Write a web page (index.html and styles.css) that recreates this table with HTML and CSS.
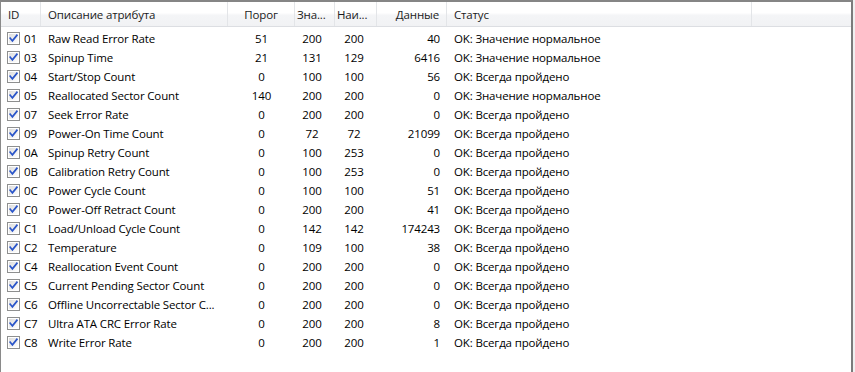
FILE: index.html
```html
<!DOCTYPE html>
<html lang="ru">
<head>
<meta charset="utf-8">
<title>SMART</title>
<link rel="stylesheet" href="styles.css">
</head>
<body>
<svg class="defs" width="0" height="0" aria-hidden="true">
  <defs>
    <linearGradient id="cbg" x1="0" y1="0" x2="1" y2="1">
      <stop offset="0" stop-color="#dcdcdc"/>
      <stop offset="1" stop-color="#ffffff"/>
    </linearGradient>
    <symbol id="cb" viewBox="0 0 13 13">
      <rect x="0.5" y="0.5" width="12" height="12" fill="#fff" stroke="#8e8f8f"/>
      <rect x="2" y="2" width="9" height="9" fill="url(#cbg)"/>
      <path d="M3.2 6.2 L5.4 8.8 L9.9 3.3" fill="none" stroke="#2a55c9" stroke-width="1.7" stroke-linecap="square" stroke-linejoin="miter"/>
    </symbol>
  </defs>
</svg>
<div class="list">
  <div class="head">
    <div class="hc h-id">ID</div>
    <div class="hc h-desc">Описание атрибута</div>
    <div class="hc h-c">Порог</div>
    <div class="hc h-l">Зна...</div>
    <div class="hc h-l">Наи...</div>
    <div class="hc h-r">Данные</div>
    <div class="hc h-st">Статус</div>
    <div class="hc h-end"></div>
  </div>
  <div class="rows">
    <div class="row"><div class="c c-id"><svg class="cb"><use href="#cb"/></svg>01</div><div class="c c-desc">Raw Read Error Rate</div><div class="c c-p">51</div><div class="c c-v">200</div><div class="c c-w">200</div><div class="c c-d">40</div><div class="c c-s">OK: Значение нормальное</div></div>
    <div class="row"><div class="c c-id"><svg class="cb"><use href="#cb"/></svg>03</div><div class="c c-desc">Spinup Time</div><div class="c c-p">21</div><div class="c c-v">131</div><div class="c c-w">129</div><div class="c c-d">6416</div><div class="c c-s">OK: Значение нормальное</div></div>
    <div class="row"><div class="c c-id"><svg class="cb"><use href="#cb"/></svg>04</div><div class="c c-desc">Start/Stop Count</div><div class="c c-p">0</div><div class="c c-v">100</div><div class="c c-w">100</div><div class="c c-d">56</div><div class="c c-s">OK: Всегда пройдено</div></div>
    <div class="row"><div class="c c-id"><svg class="cb"><use href="#cb"/></svg>05</div><div class="c c-desc">Reallocated Sector Count</div><div class="c c-p">140</div><div class="c c-v">200</div><div class="c c-w">200</div><div class="c c-d">0</div><div class="c c-s">OK: Значение нормальное</div></div>
    <div class="row"><div class="c c-id"><svg class="cb"><use href="#cb"/></svg>07</div><div class="c c-desc">Seek Error Rate</div><div class="c c-p">0</div><div class="c c-v">200</div><div class="c c-w">200</div><div class="c c-d">0</div><div class="c c-s">OK: Всегда пройдено</div></div>
    <div class="row"><div class="c c-id"><svg class="cb"><use href="#cb"/></svg>09</div><div class="c c-desc">Power-On Time Count</div><div class="c c-p">0</div><div class="c c-v">72</div><div class="c c-w">72</div><div class="c c-d">21099</div><div class="c c-s">OK: Всегда пройдено</div></div>
    <div class="row"><div class="c c-id"><svg class="cb"><use href="#cb"/></svg>0A</div><div class="c c-desc">Spinup Retry Count</div><div class="c c-p">0</div><div class="c c-v">100</div><div class="c c-w">253</div><div class="c c-d">0</div><div class="c c-s">OK: Всегда пройдено</div></div>
    <div class="row"><div class="c c-id"><svg class="cb"><use href="#cb"/></svg>0B</div><div class="c c-desc">Calibration Retry Count</div><div class="c c-p">0</div><div class="c c-v">100</div><div class="c c-w">253</div><div class="c c-d">0</div><div class="c c-s">OK: Всегда пройдено</div></div>
    <div class="row"><div class="c c-id"><svg class="cb"><use href="#cb"/></svg>0C</div><div class="c c-desc">Power Cycle Count</div><div class="c c-p">0</div><div class="c c-v">100</div><div class="c c-w">100</div><div class="c c-d">51</div><div class="c c-s">OK: Всегда пройдено</div></div>
    <div class="row"><div class="c c-id"><svg class="cb"><use href="#cb"/></svg>C0</div><div class="c c-desc">Power-Off Retract Count</div><div class="c c-p">0</div><div class="c c-v">200</div><div class="c c-w">200</div><div class="c c-d">41</div><div class="c c-s">OK: Всегда пройдено</div></div>
    <div class="row"><div class="c c-id"><svg class="cb"><use href="#cb"/></svg>C1</div><div class="c c-desc">Load/Unload Cycle Count</div><div class="c c-p">0</div><div class="c c-v">142</div><div class="c c-w">142</div><div class="c c-d">174243</div><div class="c c-s">OK: Всегда пройдено</div></div>
    <div class="row"><div class="c c-id"><svg class="cb"><use href="#cb"/></svg>C2</div><div class="c c-desc">Temperature</div><div class="c c-p">0</div><div class="c c-v">109</div><div class="c c-w">100</div><div class="c c-d">38</div><div class="c c-s">OK: Всегда пройдено</div></div>
    <div class="row"><div class="c c-id"><svg class="cb"><use href="#cb"/></svg>C4</div><div class="c c-desc">Reallocation Event Count</div><div class="c c-p">0</div><div class="c c-v">200</div><div class="c c-w">200</div><div class="c c-d">0</div><div class="c c-s">OK: Всегда пройдено</div></div>
    <div class="row"><div class="c c-id"><svg class="cb"><use href="#cb"/></svg>C5</div><div class="c c-desc">Current Pending Sector Count</div><div class="c c-p">0</div><div class="c c-v">200</div><div class="c c-w">200</div><div class="c c-d">0</div><div class="c c-s">OK: Всегда пройдено</div></div>
    <div class="row"><div class="c c-id"><svg class="cb"><use href="#cb"/></svg>C6</div><div class="c c-desc">Offline Uncorrectable Sector C...</div><div class="c c-p">0</div><div class="c c-v">200</div><div class="c c-w">200</div><div class="c c-d">0</div><div class="c c-s">OK: Всегда пройдено</div></div>
    <div class="row"><div class="c c-id"><svg class="cb"><use href="#cb"/></svg>C7</div><div class="c c-desc">Ultra ATA CRC Error Rate</div><div class="c c-p">0</div><div class="c c-v">200</div><div class="c c-w">200</div><div class="c c-d">8</div><div class="c c-s">OK: Всегда пройдено</div></div>
    <div class="row"><div class="c c-id"><svg class="cb"><use href="#cb"/></svg>C8</div><div class="c c-desc">Write Error Rate</div><div class="c c-p">0</div><div class="c c-v">200</div><div class="c c-w">200</div><div class="c c-d">1</div><div class="c c-s">OK: Всегда пройдено</div></div>
  </div>
</div>
</body>
</html>
```
FILE: styles.css
```css
html, body {
  margin: 0;
  padding: 0;
}
body {
  background: #f0f0f0;
  font-family: "Open Sans", "Noto Sans", sans-serif;
  font-size: 11.5px;
  letter-spacing: -0.15px;
  color: #000;
  overflow: hidden;
}
.defs {
  position: absolute;
  width: 0;
  height: 0;
}
.list {
  box-sizing: border-box;
  width: 853px;
  height: 372px;
  background: #fff;
  border-top: 2px solid #858585;
  border-left: 1px solid #8a8a8a;
  border-right: 2px solid #7b7b7b;
}
.head,
.row {
  display: grid;
  grid-template-columns: 40px 187px 67px 40px 42px 70px 305px 1fr;
}
.head {
  box-sizing: border-box;
  height: 25px;
  border-bottom: 1px solid #dcdee2;
  background: linear-gradient(#ffffff 0, #ffffff 45%, #f4f5f7 55%, #f1f2f4 100%);
}
.hc {
  box-sizing: border-box;
  height: 24px;
  padding-top: 4px;
  line-height: 17px;
  white-space: nowrap;
  overflow: hidden;
  color: #1b1b1b;
  border-right: 1px solid #e3e5e8;
}
.h-id { padding-left: 7px; }
.h-desc { padding-left: 7px; }
.h-c { text-align: center; }
.h-l { padding-left: 2px; }
.h-r { text-align: right; padding-right: 7px; }
.h-st { padding-left: 7px; }
.h-end { border-right: none; }

.rows {
  padding-top: 2px;
}
.row {
  height: 19px;
  line-height: 19px;
}
.c {
  white-space: nowrap;
  overflow: hidden;
}
.c-id {
  display: flex;
  align-items: center;
  padding-left: 6px;
}
.cb {
  width: 13px;
  height: 13px;
  margin-right: 4px;
  flex: none;
}
.c-desc { padding-left: 7px; }
.c-p { text-align: center; }
.c-v { text-align: center; padding-right: 6px; }
.c-w { text-align: center; padding-right: 4px; }
.c-d { text-align: right; padding-right: 7px; }
.c-s { padding-left: 7px; }
```
